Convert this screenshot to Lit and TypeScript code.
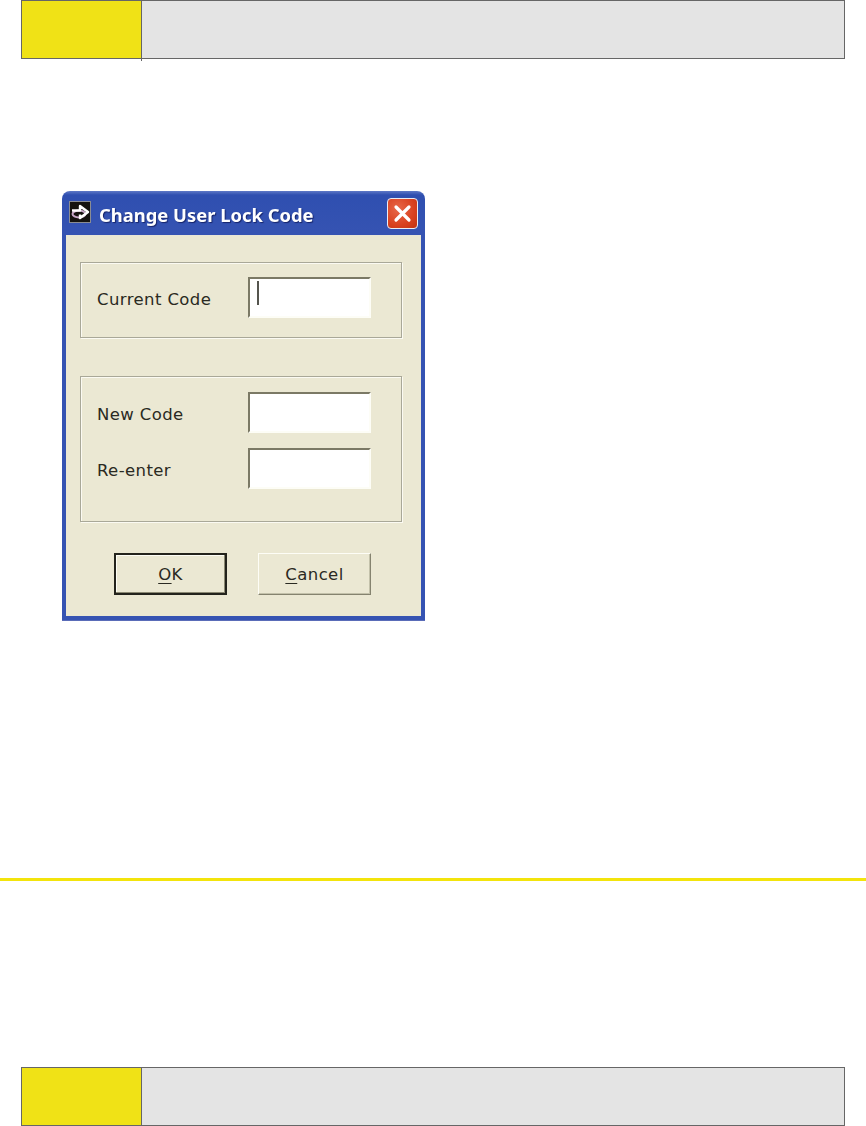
import { LitElement, html, css } from "lit";
import { customElement } from "lit/decorators.js";

@customElement("app-root")
export class AppRoot extends LitElement {
  static styles = css`
    :host { display: block; width: 866px; height: 1126px; background: #fff; overflow: hidden; font-family: "DejaVu Sans", "Noto Sans", sans-serif; }
    .page { display: flex; flex-direction: column; height: 1126px; box-sizing: border-box; }
    .banner { box-sizing: border-box; width: 824px; height: 59px; margin-left: 21px; display: flex; border: 1px solid #666; background: #e4e4e4; flex: none; }
    .tab { width: 119px; background: #f0e216; border-right: 1px solid #666; position: relative; }
    .tab::after { content: ""; position: absolute; right: -1px; bottom: -3px; width: 1px; height: 2px; background: #666; }
    .dialog { box-sizing: border-box; width: 363px; height: 430px; margin: 132px 0 0 62px; flex: none; background: linear-gradient(#5d78c6, #2f4fb0 4px, #3553b2 40px); border-radius: 8px 8px 0 0; padding: 0 4px 4px; display: flex; flex-direction: column; filter: blur(0.55px); border-bottom: 1px solid #5a6cb8; }
    .title { height: 44px; flex: none; display: flex; align-items: center; box-sizing: border-box; padding: 0 3px; color: #fff; font-family: "Noto Sans", sans-serif; font-weight: 700; font-size: 18.4px; text-shadow: 1px 1px 1px #16246a; }
    .appicon { width: 22px; height: 22px; flex: none; margin-right: 8px; margin-top: -3px; display: block; }
    .title-text { flex: 1; white-space: nowrap; margin-top: 2px; }
    .close { width: 31px; height: 31px; flex: none; box-sizing: border-box; border: 1.5px solid #e8ecf6; border-radius: 4px; background: radial-gradient(circle at 35% 35%, #e8694a, #d9411f 60%, #c23212); display: flex; align-items: center; justify-content: center; }
    .close svg { display: block; }
    .body { flex: 1; background: #ebe8d3; padding: 26px 19px 0 14px; display: flex; flex-direction: column; box-sizing: border-box; border-top: 1px solid #e9e6d6; }
    .group { box-sizing: border-box; border: 1px solid #a9a898; box-shadow: 1px 1px 0 #fbfaf2, inset 1px 1px 0 #fbfaf2; display: flex; flex-direction: column; padding: 14px 30px 0 16px; }
    .g1 { height: 76px; }
    .g2 { height: 146px; margin-top: 38px; padding-top: 15px; gap: 15px; }
    .row { display: flex; justify-content: space-between; align-items: center; color: #2a2a22; font-size: 16.5px; letter-spacing: 0.4px; }
    .row span { padding-top: 3px; }
    .input { box-sizing: border-box; width: 123px; height: 41px; background: #fff; border: 2px solid; border-color: #7b7965 #fdfdf6 #fdfdf6 #7b7965; position: relative; }
    .caret { position: absolute; left: 7px; top: 2px; width: 2px; height: 24px; background: #55554e; }
    .buttons { display: flex; gap: 31px; margin: 31px 0 0 34px; }
    .btn { box-sizing: border-box; width: 113px; height: 42px; display: flex; align-items: center; justify-content: center; background: #ebe8d3; font-size: 16.5px; letter-spacing: 0.4px; color: #2a2a22; border: 1px solid; border-color: #fdfdf6 #85836f #85836f #fdfdf6; box-shadow: inset -1px -1px 0 #c3c1aa; }
    .btn u { text-underline-offset: 3px; }
    .btn.def { border: 2px solid #23231c; box-shadow: inset -1px -1px 0 #8b8973, inset 1px 1px 0 #fdfdf6; }
    .rule { height: 3px; background: #f3e40c; margin-top: 257px; flex: none; }
    .bottom { margin-top: 186px; }
  `;

  render() {
    return html`
      <div class="page">
        <div class="banner"><div class="tab"></div></div>
        <div class="dialog">
          <div class="title">
            <svg class="appicon" viewBox="0 0 22 22">
              <rect x="0.5" y="0.5" width="21" height="21" fill="#15130f" stroke="#8a8c92"/>
              <ellipse cx="10" cy="13" rx="6.5" ry="3.5" fill="none" stroke="#c8a8c8" stroke-width="2"/>
              <path d="M3 9.5h8V5l8 6-8 6v-3.5" fill="none" stroke="#fff" stroke-width="2.4" stroke-linejoin="round"/>
            </svg>
            <span class="title-text">Change User Lock Code</span>
            <div class="close">
              <svg width="19" height="19" viewBox="0 0 19 19"><path d="M3 3l13 13M16 3L3 16" stroke="#fff" stroke-width="3.2" stroke-linecap="round"/></svg>
            </div>
          </div>
          <div class="body">
            <div class="group g1">
              <div class="row"><span>Current Code</span><div class="input"><div class="caret"></div></div></div>
            </div>
            <div class="group g2">
              <div class="row"><span>New Code</span><div class="input"></div></div>
              <div class="row"><span>Re-enter</span><div class="input"></div></div>
            </div>
            <div class="buttons">
              <div class="btn def"><span><u>O</u>K</span></div>
              <div class="btn"><span><u>C</u>ancel</span></div>
            </div>
          </div>
        </div>
        <div class="rule"></div>
        <div class="banner bottom"><div class="tab"></div></div>
      </div>
    `;
  }
}
